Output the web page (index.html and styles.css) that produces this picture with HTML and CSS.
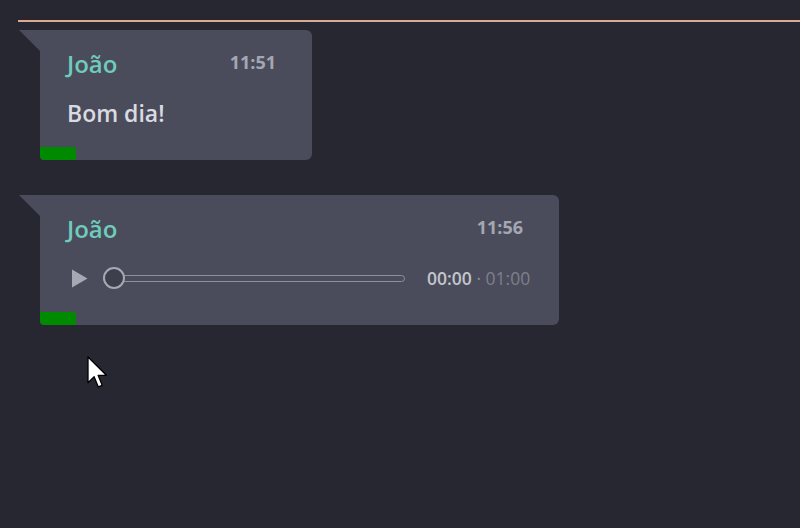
FILE: index.html
```html
<!DOCTYPE html>
<html lang="pt">
<head>
  <meta charset="UTF-8">
  <meta name="viewport" content="width=device-width, initial-scale=1">
  <title>Chat</title>
  <link rel="stylesheet" href="styles.css">
</head>
<body>

  <div class="chat">
    <div class="divider"></div>

    <div class="msg">
      <div class="tail"></div>
      <div class="bubble bubble-text">
        <div class="content">
          <div class="head">
            <span class="name">João</span>
            <span class="time">11:51</span>
          </div>
          <div class="text">Bom dia!</div>
        </div>
        <div class="status"></div>
      </div>
    </div>

    <div class="msg">
      <div class="tail"></div>
      <div class="bubble bubble-audio">
        <div class="content">
          <div class="head">
            <span class="name">João</span>
            <span class="time">11:56</span>
          </div>
          <div class="audio">
            <svg class="play" width="17" height="19" viewBox="0 0 17 19">
              <path d="M1 0.5 L16.5 9.5 L1 18.5 Z" fill="#a6a8b3"/>
            </svg>
            <div class="seek">
              <div class="track"></div>
              <div class="thumb"></div>
            </div>
            <div class="duration">
              <span class="cur">00:00</span>
              <span class="sep">·</span>
              <span class="total">01:00</span>
            </div>
          </div>
        </div>
        <div class="status"></div>
      </div>
    </div>
  </div>

  <svg class="cursor" width="21" height="33" viewBox="0 0 13 20.5">
    <path d="M0.6 0.6 L0.6 16.6 L4.4 12.9 L7 19.2 L9.4 18.2 L6.9 12 L12 12 Z" fill="#fff" stroke="#000" stroke-width="0.8" stroke-linejoin="round"/>
  </svg>

</body>
</html>
```

FILE: styles.css
```css
body {
  margin: 0;
  padding: 0;
  background: #262731;
  font-family: 'Open Sans', 'Noto Sans', sans-serif;
  height: 528px;
  overflow: hidden;
}

.chat {
  padding: 19px 0 0 18px;
}

.divider {
  height: 2px;
  background: #d6a999;
  border-top: 1px solid #34221f;
}

.msg {
  display: flex;
  margin-top: 8px;
  padding-left: 1px;
}

.msg + .msg {
  margin-top: 35px;
}

.tail {
  width: 21px;
  height: 21px;
  background: #4a4c5c;
  clip-path: polygon(0 0, 100% 0, 100% 100%);
}

.bubble {
  background: #4a4c5c;
  border-radius: 0 6px 6px 4px;
  display: flex;
  flex-direction: column;
  overflow: hidden;
}

.bubble-text {
  width: 272px;
}

.bubble-audio {
  width: 519px;
}

.content {
  padding: 19px 28px 0 27px;
}

.head {
  display: flex;
  justify-content: space-between;
  align-items: flex-start;
}

.name {
  color: #6fcbbb;
  font-size: 24px;
  font-weight: 600;
  line-height: 30px;
}

.time {
  color: #a4a7b2;
  font-size: 18px;
  font-weight: 700;
  line-height: 22px;
  margin-top: 2px;
  margin-right: 8px;
}

.text {
  margin-top: 19px;
  color: #dadbe0;
  font-size: 23px;
  font-weight: 600;
  line-height: 30px;
}

.audio {
  margin-top: 19px;
  height: 30px;
  display: flex;
  align-items: center;
}

.play {
  margin-left: 4px;
}

.seek {
  position: relative;
  width: 302px;
  height: 22px;
  margin-left: 15px;
  display: flex;
  align-items: center;
}

.track {
  flex: 1;
  height: 5px;
  border: 1px solid #8e909c;
  border-radius: 4px;
  background: #4a4c5c;
}

.thumb {
  position: absolute;
  left: 0;
  top: 0;
  width: 18px;
  height: 18px;
  border: 2px solid #a6a8b3;
  border-radius: 50%;
  background: #3d3f4c;
}

.duration {
  margin-left: 22px;
  font-size: 17.5px;
  white-space: nowrap;
}

.cur {
  color: #c3c5cc;
  font-weight: 600;
}

.sep {
  color: #8a8d99;
}

.total {
  color: #7d808c;
}

.status {
  margin-top: 19px;
  width: 36px;
  height: 13px;
  background: #008a00;
  border-radius: 0 3px 0 4px;
}

.cursor {
  position: absolute;
  left: 87px;
  top: 356px;
}
```
